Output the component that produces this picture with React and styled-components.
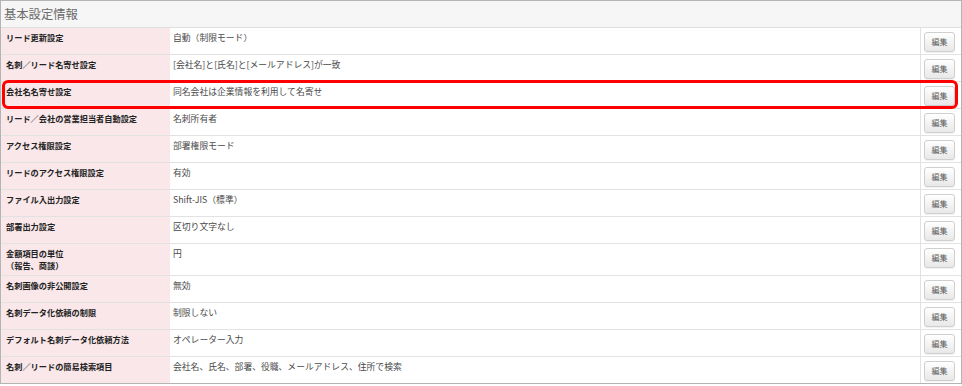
import React from "react";
import styled, { createGlobalStyle, css } from "styled-components";

const GlobalStyle = createGlobalStyle`
  html, body {
    margin: 0;
    padding: 0;
    background: #ffffff;
  }
  body {
    font-family: "Noto Sans CJK JP", "Noto Sans", sans-serif;
  }
`;

const Panel = styled.section`
  width: 960px;
  border: 1px solid #b4b4b4;
  background: #fff;
`;

const PanelHeader = styled.h2`
  margin: 0;
  height: 26px;
  padding: 0 3px;
  display: flex;
  align-items: center;
  background: #f6f6f6;
  border-bottom: 1px solid #dedede;
  font-size: 12.3px;
  font-weight: 400;
  color: #6a6a6a;
`;

const Row = styled.div`
  position: relative;
  display: grid;
  grid-template-columns: 169px 1fr 41px;
  min-height: 26px;
  border-bottom: 1px solid #e2e2e2;

  &:last-child {
    border-bottom: none;
  }

  ${(p) =>
    p.$highlight &&
    css`
      &::after {
        content: "";
        position: absolute;
        top: -2px;
        left: 1px;
        right: 3px;
        bottom: -1px;
        border: 3px solid #ff0000;
        border-radius: 6px;
        pointer-events: none;
      }
    `}
`;

const Label = styled.div`
  background: #f9e7e9;
  padding: 3px 5px 4px;
  font-size: 8.2px;
  line-height: 12px;
  font-weight: 700;
  color: #222;
  white-space: nowrap;
`;

const Value = styled.div`
  padding: 4px 3px 2px;
  font-size: 8.8px;
  line-height: 12px;
  color: #4a4a4a;
  white-space: nowrap;
`;

const Action = styled.div`
  display: flex;
  align-items: flex-start;
  border-left: 1px solid #e2e2e2;
  padding: 4px 0 2px 3px;
  line-height: 0;
`;

const EditButton = styled.button`
  width: 31px;
  height: 20px;
  padding: 0;
  border: 1px solid #cfcfcf;
  border-radius: 3px;
  background: linear-gradient(#ffffff, #e8e8e8);
  box-shadow: 0 1px 1px rgba(0, 0, 0, 0.06);
  font-family: "Noto Sans CJK JP", sans-serif;
  font-size: 8px;
  line-height: 18px;
  color: #5a5a5a;
  cursor: pointer;
`;

const settings = [
  { label: "リード更新設定", value: "自動（制限モード）" },
  { label: "名刺／リード名寄せ設定", value: "[会社名]と[氏名]と[メールアドレス]が一致" },
  { label: "会社名名寄せ設定", value: "同名会社は企業情報を利用して名寄せ", highlight: true },
  { label: "リード／会社の営業担当者自動設定", value: "名刺所有者" },
  { label: "アクセス権限設定", value: "部署権限モード" },
  { label: "リードのアクセス権限設定", value: "有効" },
  { label: "ファイル入出力設定", value: "Shift-JIS（標準）" },
  { label: "部署出力設定", value: "区切り文字なし" },
  { label: ["金額項目の単位", "（報告、商談）"], value: "円" },
  { label: "名刺画像の非公開設定", value: "無効" },
  { label: "名刺データ化依頼の制限", value: "制限しない" },
  { label: "デフォルト名刺データ化依頼方法", value: "オペレーター入力" },
  { label: "名刺／リードの簡易検索項目", value: "会社名、氏名、部署、役職、メールアドレス、住所で検索" },
];

const App = () => {
  return (
    <>
      <GlobalStyle />
      <Panel>
        <PanelHeader>基本設定情報</PanelHeader>
        {settings.map((s, i) => (
          <Row key={i} $highlight={s.highlight}>
            <Label>
              {Array.isArray(s.label)
                ? s.label.map((l, j) => <div key={j}>{l}</div>)
                : s.label}
            </Label>
            <Value>{s.value}</Value>
            <Action>
              <EditButton>編集</EditButton>
            </Action>
          </Row>
        ))}
      </Panel>
    </>
  );
};

export default App;
